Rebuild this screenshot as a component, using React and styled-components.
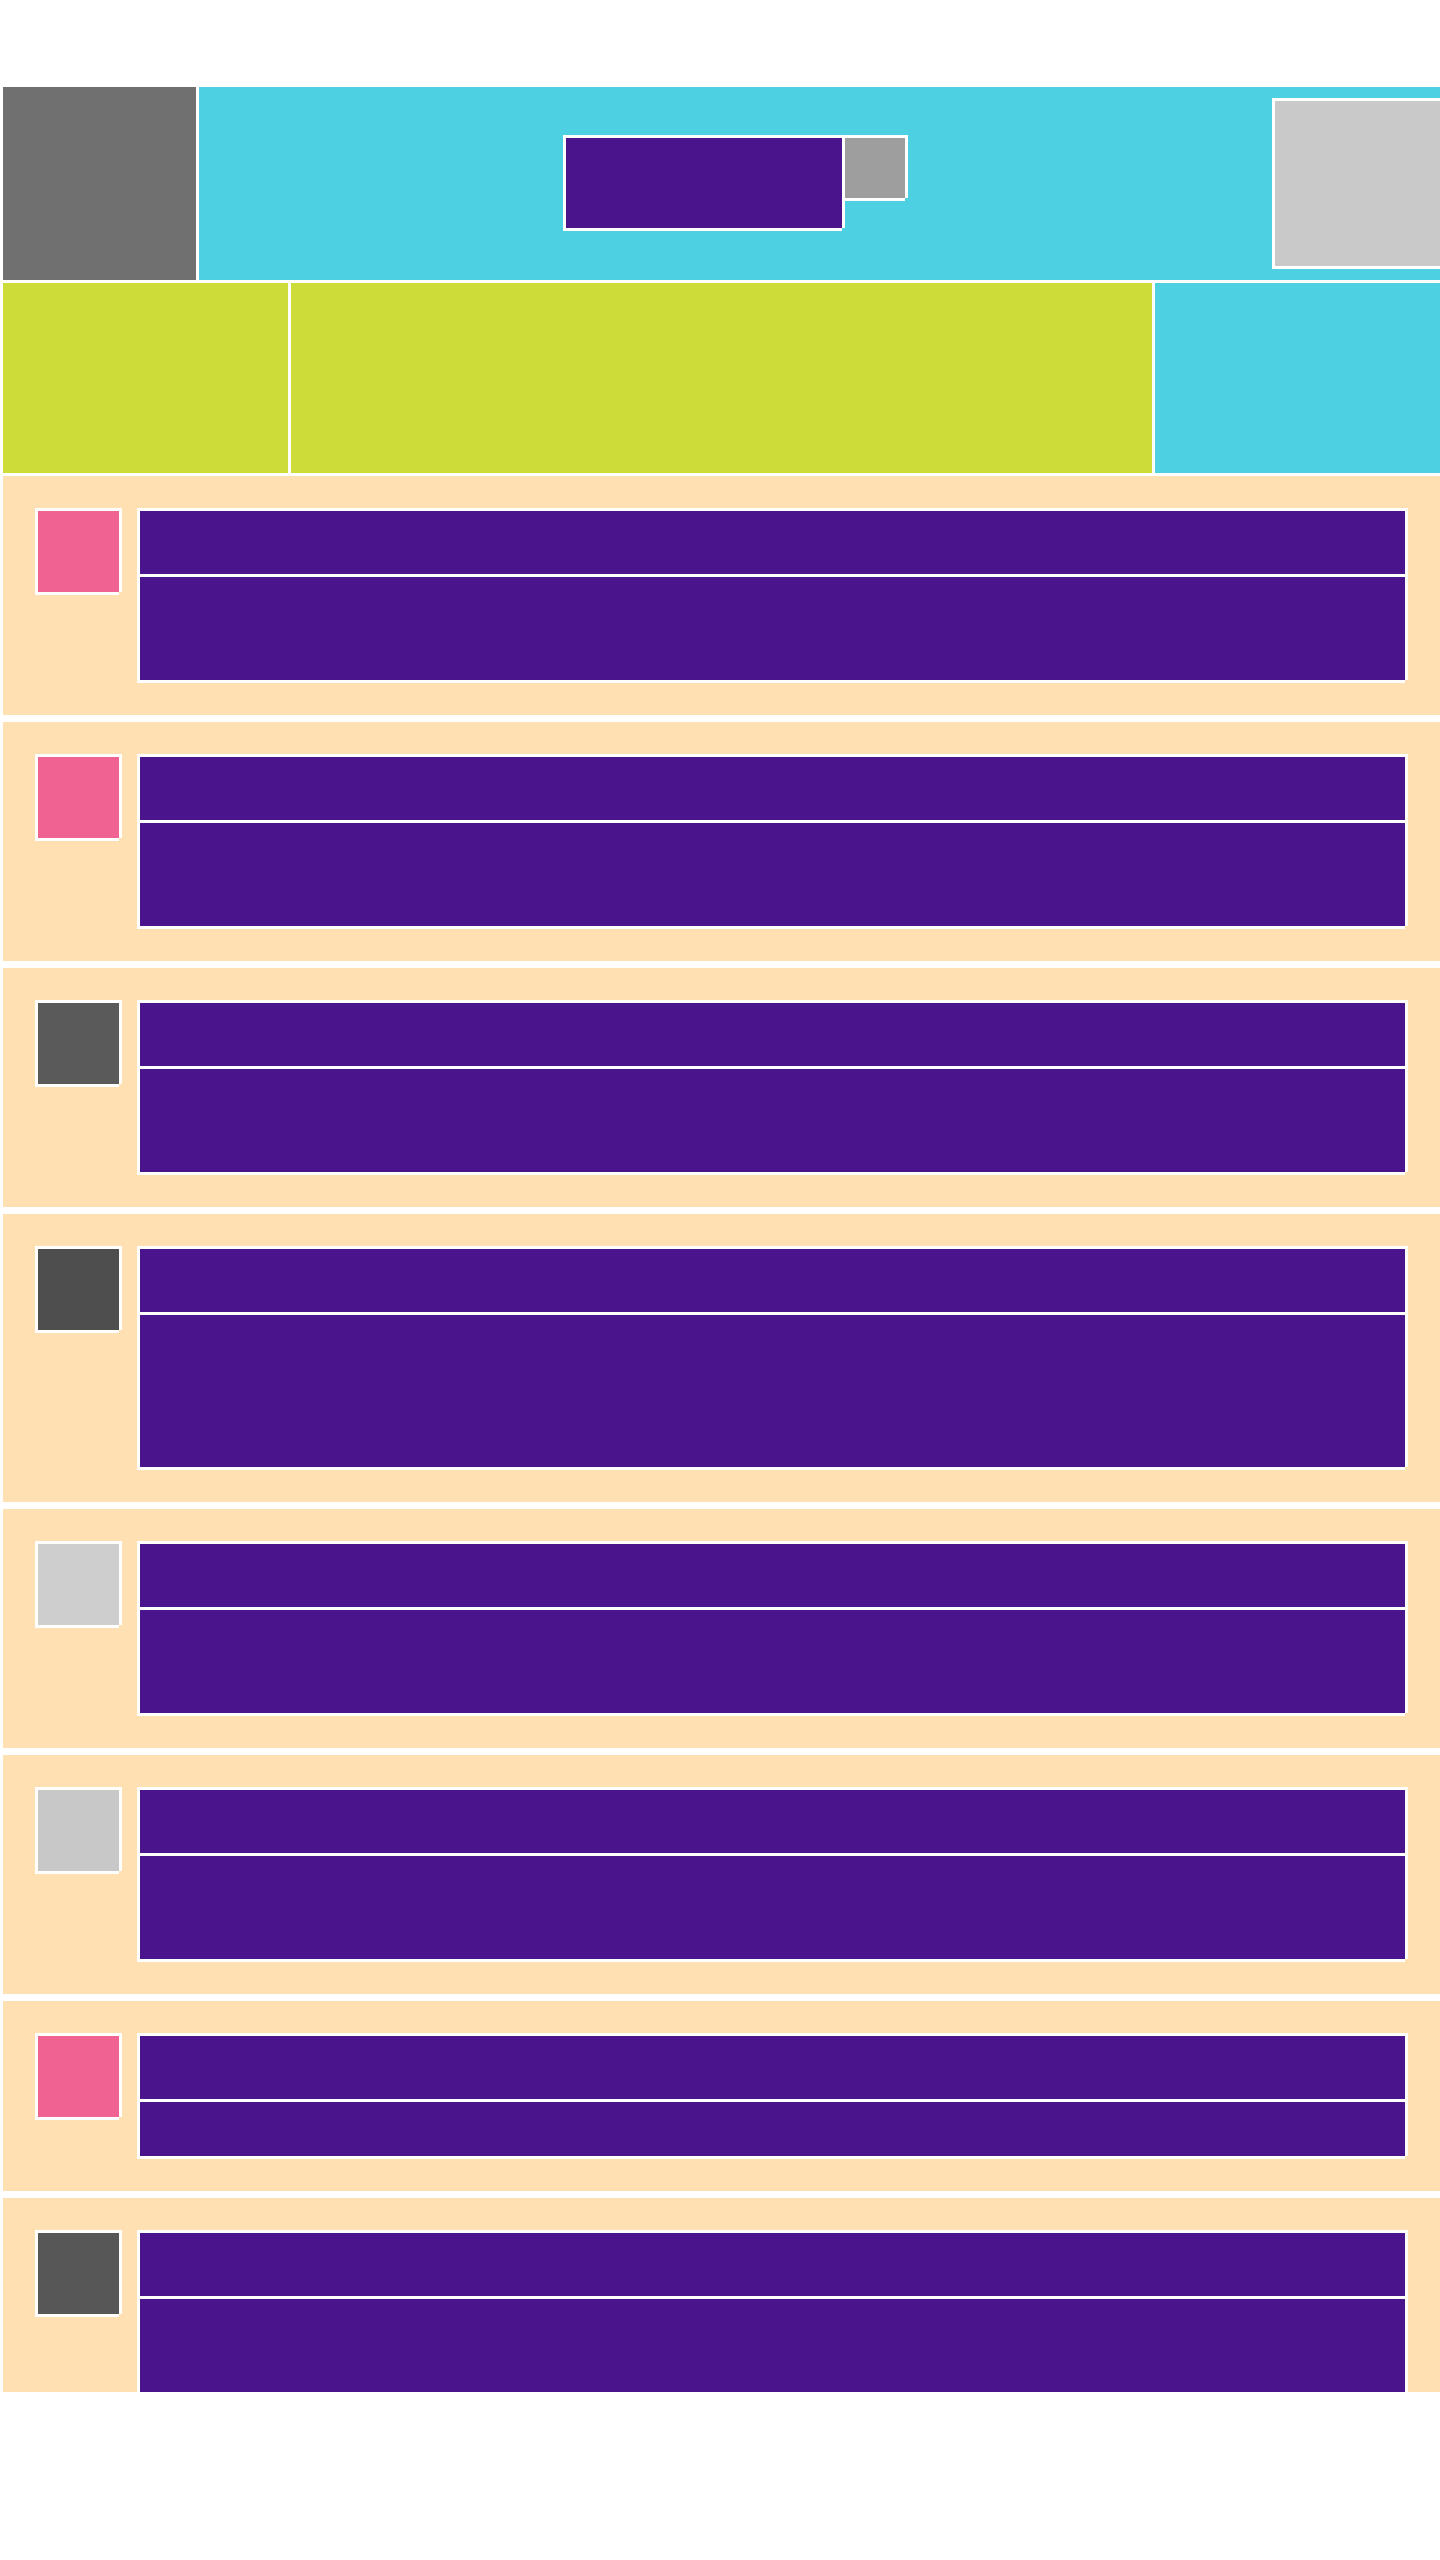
import React from 'react';
import styled, { createGlobalStyle, css } from 'styled-components';

const GlobalStyle = createGlobalStyle`
  html, body {
    margin: 0;
    padding: 0;
    background: #ffffff;
    font-family: "Liberation Sans", Arial, sans-serif;
  }
  *, *::before, *::after {
    box-sizing: border-box;
  }
`;

// every block carries a 3px white frame; the bottom-right corner stays open
const frame = css`
  border-top: 3px solid #ffffff;
  border-left: 3px solid #ffffff;
  box-shadow: 3px 0 0 #ffffff, 0 3px 0 #ffffff;
`;

const Page = styled.div`
  height: 2392px;
  padding-top: 84px;
  overflow: hidden;
`;

const Header = styled.header`
  display: flex;
  height: 196px;
`;

const Logo = styled.div`
  ${frame};
  width: 196px;
  flex-shrink: 0;
  background: #707070;
`;

const Nav = styled.nav`
  ${frame};
  flex: 1;
  display: flex;
  align-items: center;
  background: #4dd0e1;
`;

const NavCenter = styled.div`
  flex: 1;
  display: flex;
  justify-content: center;
  align-items: center;
`;

const SearchGroup = styled.div`
  display: flex;
  align-items: flex-start;
  padding: 0 3px 4px 0;
`;

const SearchField = styled.div`
  ${frame};
  width: 279px;
  height: 93px;
  background: #4a148c;
`;

const SearchButton = styled.div`
  ${frame};
  width: 63px;
  height: 63px;
  background: #9e9e9e;
`;

const Avatar = styled.div`
  ${frame};
  width: 168px;
  height: 168px;
  margin-bottom: 3px;
  flex-shrink: 0;
  background: #c9c9c9;
`;

const SubBar = styled.div`
  display: grid;
  grid-template-columns: 1fr 3fr 1fr;
  height: 193px;
`;

const Tile = styled.div`
  ${frame};
  background: ${props => props.$bg};
`;

const List = styled.div`
  display: flex;
  flex-direction: column;
`;

const Card = styled.article`
  ${frame};
  display: flex;
  align-items: flex-start;
  gap: 18px;
  padding: 32px 35px 35px 32px;
  margin-bottom: 4px;
  background: #ffe0b2;
`;

const Thumb = styled.div`
  ${frame};
  width: 84px;
  height: 84px;
  flex-shrink: 0;
  background: ${props => props.$bg};
`;

const Body = styled.div`
  flex: 1;
  display: flex;
  flex-direction: column;
`;

const Title = styled.div`
  ${frame};
  height: 66px;
  background: #4a148c;
`;

const Text = styled.div`
  ${frame};
  height: ${props => props.$h + 3}px;
  background: #4a148c;
`;

const posts = [
  { id: 1, thumb: '#f06292', text: 103 },
  { id: 2, thumb: '#f06292', text: 103 },
  { id: 3, thumb: '#5a5a5a', text: 103 },
  { id: 4, thumb: '#4e4e4e', text: 152 },
  { id: 5, thumb: '#cecece', text: 103 },
  { id: 6, thumb: '#c8c8c8', text: 103 },
  { id: 7, thumb: '#f06292', text: 54 },
  { id: 8, thumb: '#575757', text: 103 },
];

const App = () => {
  return (
    <>
      <GlobalStyle />
      <Page>
        <Header>
          <Logo />
          <Nav>
            <NavCenter>
              <SearchGroup>
                <SearchField />
                <SearchButton />
              </SearchGroup>
            </NavCenter>
            <Avatar />
          </Nav>
        </Header>

        <SubBar>
          <Tile $bg="#cddc39" />
          <Tile $bg="#cddc39" />
          <Tile $bg="#4dd0e1" />
        </SubBar>

        <List>
          {posts.map(post => (
            <Card key={post.id}>
              <Thumb $bg={post.thumb} />
              <Body>
                <Title />
                <Text $h={post.text} />
              </Body>
            </Card>
          ))}
        </List>
      </Page>
    </>
  );
};

export default App;
